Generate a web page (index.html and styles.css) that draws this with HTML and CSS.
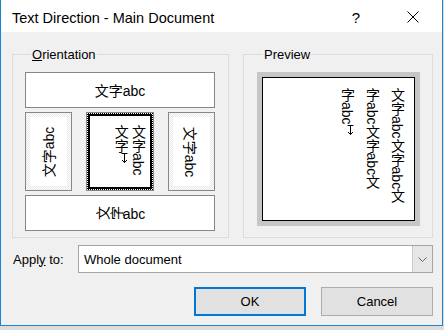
FILE: index.html
```html
<!DOCTYPE html>
<html lang="en">
<head>
	<meta charset="UTF-8">
	<title>Text Direction - Main Document</title>
	<link rel="stylesheet" href="styles.css">
</head>
<body>
	<div class="dialog">
		<div class="dialog__title">
			<span class="dialog__caption">Text Direction - Main Document</span>
			<span class="dialog__help">?</span>
			<svg class="dialog__close" width="12" height="12" viewBox="0 0 12 12">
				<path d="M0.5 0.5 L11.5 11.5 M11.5 0.5 L0.5 11.5" stroke="#000" stroke-width="1" fill="none"/>
			</svg>
		</div>

		<div class="dialog__body">
			<div class="dialog__groups">
				<fieldset class="group group--orient">
					<legend class="group__label"><u>O</u>rientation</legend>
					<div class="orient">
						<div class="orient__btn orient__btn--wide">
							<span>文字abc</span>
						</div>
						<div class="orient__row">
							<div class="orient__btn orient__btn--off">
								<div class="orient__face"><span class="rot rot--ccw">文字abc</span></div>
							</div>
							<div class="orient__btn orient__btn--sel">
								<div class="orient__face orient__face--sel">
									<p class="vtext vtext--small">文字abc<br>文字<svg class="para" width="9" height="10" viewBox="0 0 9 10"><path d="M1.5 0.5 H7.5 M4.5 0.5 V9.5 M2 7 L4.5 9.5 L7 7" stroke="#000" fill="none"/></svg></p>
								</div>
							</div>
							<div class="orient__btn orient__btn--off">
								<div class="orient__face"><span class="rot rot--cw">文字abc</span></div>
							</div>
						</div>
						<div class="orient__btn orient__btn--wide">
							<span><span class="side">文</span><span class="side">字</span>abc</span>
						</div>
					</div>
				</fieldset>

				<fieldset class="group group--preview">
					<legend class="group__label">Preview</legend>
					<div class="page">
						<div class="page__sheet">
							<p class="vtext vtext--page">文字abc文字abc文<br>字abc文字abc文<br>字abc<svg class="para" width="9" height="10" viewBox="0 0 9 10"><path d="M1.5 0.5 H7.5 M4.5 0.5 V9.5 M2 7 L4.5 9.5 L7 7" stroke="#000" fill="none"/></svg></p>
						</div>
					</div>
				</fieldset>
			</div>

			<div class="apply">
				<label class="apply__label">Appl<u>y</u> to:</label>
				<div class="select">
					<span class="select__value">Whole document</span>
					<span class="select__btn">
						<svg width="9" height="5" viewBox="0 0 9 5"><path d="M0.5 0.5 L4.5 4.5 L8.5 0.5" stroke="#666" fill="none"/></svg>
					</span>
				</div>
			</div>

			<div class="actions">
				<button class="button button--default" type="button">OK</button>
				<button class="button" type="button">Cancel</button>
			</div>
		</div>
	</div>
</body>
</html>
```

FILE: styles.css
```css
body {
	margin: 0;
	background: #dcdcdc;
	font-family: "Liberation Sans", "Noto Sans CJK SC", sans-serif;
	font-size: 13px;
	color: #000;
}

.dialog {
	display: flex;
	flex-direction: column;
	width: 441px;
	height: 325px;
	border: 1px solid #1883d7;
	border-top: none;
	background: #f0f0f0;
}

.dialog__title {
	display: flex;
	align-items: center;
	box-sizing: border-box;
	height: 32px;
	padding: 3px 23px 0 11px;
	background: #fff;
}
.dialog__caption {
	flex: 1;
	font-size: 14.5px;
}
.dialog__help {
	width: 20px;
	text-align: center;
	font-size: 15px;
	margin-right: 41px;
}
.dialog__close { display: block; margin-top: -2px; }

.dialog__body {
	flex: 1;
	padding: 15px 9px 0 11px;
}

.dialog__groups {
	display: flex;
	gap: 14px;
}

.group {
	margin: 0;
	min-width: 0;
	border: 1px solid #dcdcdc;
}
.group__label {
	padding: 0 1px;
	margin-left: 6px;
	line-height: 15px;
}
.group--orient { padding: 10px 13px 6px 12px; }
.group--preview { flex: 1; padding: 10px 12px 0 13px; }

.orient {
	display: flex;
	flex-direction: column;
	gap: 4px;
	width: 190px;
}
.orient__row {
	display: grid;
	grid-template-columns: 47px 1fr 47px;
	gap: 14px;
	height: 79px;
}
.orient__btn {
	box-sizing: border-box;
	border: 1px solid #878787;
	background: #fff;
	font-size: 14px;
	overflow: hidden;
}
.orient__btn--wide {
	display: flex;
	align-items: center;
	justify-content: center;
	height: 36px;
}
.orient__btn--off {
	padding: 4px;
	background: repeating-conic-gradient(#e6e6e6 0 25%, #fff 0 50%) 0 0 / 2px 2px;
}
.orient__btn--sel {
	padding: 1px;
	background: repeating-conic-gradient(#000 0 25%, #fff 0 50%) 0 0 / 2px 2px;
}
.orient__face {
	display: flex;
	align-items: center;
	justify-content: center;
	height: 100%;
	background: #fff;
}
.orient__face--sel {
	box-sizing: border-box;
	align-items: flex-start;
	justify-content: flex-end;
	border: 2px solid #000;
}

.rot {
	display: inline-block;
	white-space: nowrap;
}
.rot--ccw { transform: rotate(-90deg); }
.rot--cw { transform: rotate(90deg); }

.side {
	display: inline-block;
	transform: rotate(-90deg);
}

.vtext {
	margin: 0;
	writing-mode: vertical-rl;
	white-space: nowrap;
}
.vtext--small {
	font-size: 14px;
	line-height: 17px;
	padding: 9px 4px 0 0;
}
.vtext--page {
	font-size: 14px;
	line-height: 25px;
	padding: 10px 5px 0 0;
}
.para { vertical-align: middle; }

.page {
	height: 154px;
	box-sizing: border-box;
	padding: 5px;
	background: #c6c6c6;
}
.page__sheet {
	display: flex;
	justify-content: flex-end;
	align-items: flex-start;
	box-sizing: border-box;
	height: 100%;
	border: 1px solid #000;
	background: #fff;
}

.apply {
	display: flex;
	align-items: center;
	margin-top: 7px;
}
.apply__label {
	width: 65px;
	padding-left: 1px;
}
.select {
	display: flex;
	flex: 1;
	height: 28px;
	box-sizing: border-box;
	border: 1px solid #a5a5a5;
	background: #fff;
}
.select__value {
	flex: 1;
	align-self: center;
	padding-left: 5px;
}
.select__btn {
	display: flex;
	align-items: center;
	justify-content: center;
	width: 19px;
	background: #e6e6e6;
	border-left: 1px solid #c9c9c9;
}

.actions {
	display: flex;
	justify-content: flex-end;
	gap: 15px;
	margin-top: 14px;
}
.button {
	width: 112px;
	height: 29px;
	padding: 0;
	font-family: inherit;
	font-size: 13px;
	color: #000;
	background: #e1e1e1;
	border: 1px solid #adadad;
}
.button--default { border: 2px solid #0078d7; }
```
